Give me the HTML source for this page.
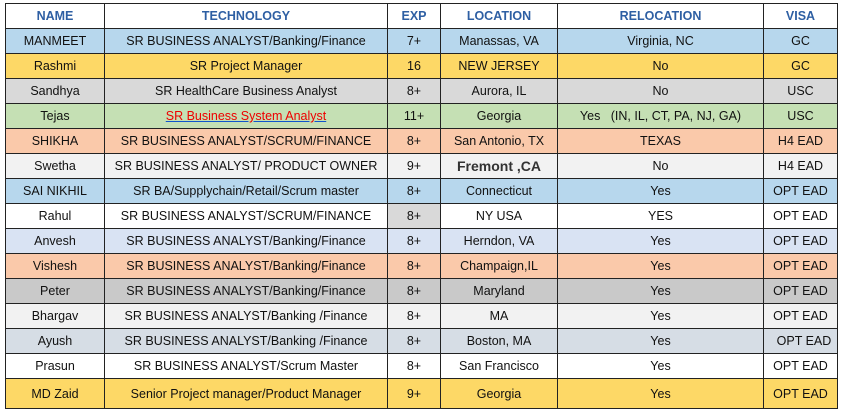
<!DOCTYPE html>
<html><head><style>
body{margin:0;background:#fff;}
table{position:absolute;left:5px;top:3px;border-collapse:collapse;table-layout:fixed;font-family:"Liberation Sans",sans-serif;font-size:12.5px;color:#111;}
td{border:1px solid #222;text-align:center;height:24px;padding:0;white-space:nowrap;overflow:hidden;}
tr.h td{color:#2e5fa3;font-weight:bold;font-size:12.5px;background:#fff;}
.b{background:#b7d7ed}.y{background:#fdd866}.g{background:#d9d9d9}.gr{background:#c5e0b4}.s{background:#fac9aa}.lg{background:#f2f2f2}.w{background:#fff}.lb{background:#d9e3f3}.dg{background:#c9c9c9}.sl{background:#d6dde5}
a{color:#e00;text-decoration:underline;text-decoration-color:#1155cc;}
</style></head><body>
<table>
<colgroup><col style="width:99px"><col style="width:283px"><col style="width:53px"><col style="width:117px"><col style="width:206px"><col style="width:74px"></colgroup>
<tr class="h"><td>NAME</td><td>TECHNOLOGY</td><td>EXP</td><td>LOCATION</td><td>RELOCATION</td><td>VISA</td></tr>
<tr class="b"><td>MANMEET</td><td>SR BUSINESS ANALYST/Banking/Finance</td><td>7+</td><td>Manassas, VA</td><td>Virginia, NC</td><td>GC</td></tr>
<tr class="y"><td>Rashmi</td><td>SR Project Manager</td><td>16</td><td>NEW JERSEY</td><td>No</td><td>GC</td></tr>
<tr class="g"><td>Sandhya</td><td>SR HealthCare Business Analyst</td><td>8+</td><td>Aurora, IL</td><td>No</td><td>USC</td></tr>
<tr class="gr"><td>Tejas</td><td><a>SR Business System Analyst </a></td><td>11+</td><td>Georgia</td><td>Yes &nbsp;&nbsp;(IN, IL, CT, PA, NJ, GA)</td><td>USC</td></tr>
<tr class="s"><td>SHIKHA</td><td>SR BUSINESS ANALYST/SCRUM/FINANCE</td><td>8+</td><td>San Antonio, TX</td><td>TEXAS</td><td>H4 EAD</td></tr>
<tr class="lg"><td>Swetha</td><td>SR BUSINESS ANALYST/ PRODUCT OWNER</td><td>9+</td><td style="font-size:14px;font-weight:bold;color:#333">Fremont ,CA</td><td>No</td><td>H4 EAD</td></tr>
<tr class="b"><td>SAI NIKHIL</td><td>SR BA/Supplychain/Retail/Scrum master</td><td>8+</td><td>Connecticut</td><td>Yes</td><td>OPT EAD</td></tr>
<tr class="w"><td>Rahul</td><td>SR BUSINESS ANALYST/SCRUM/FINANCE</td><td class="g">8+</td><td>NY USA</td><td>YES</td><td>OPT EAD</td></tr>
<tr class="lb"><td>Anvesh</td><td>SR BUSINESS ANALYST/Banking/Finance</td><td>8+</td><td>Herndon, VA</td><td>Yes</td><td>OPT EAD</td></tr>
<tr class="s"><td>Vishesh</td><td>SR BUSINESS ANALYST/Banking/Finance</td><td>8+</td><td>Champaign,IL</td><td>Yes</td><td>OPT EAD</td></tr>
<tr class="dg"><td>Peter</td><td>SR BUSINESS ANALYST/Banking/Finance</td><td>8+</td><td>Maryland</td><td>Yes</td><td>OPT EAD</td></tr>
<tr class="lg"><td>Bhargav</td><td>SR BUSINESS ANALYST/Banking /Finance</td><td>8+</td><td>MA</td><td>Yes</td><td>OPT EAD</td></tr>
<tr class="sl"><td>Ayush</td><td>SR BUSINESS ANALYST/Banking /Finance</td><td>8+</td><td>Boston, MA</td><td>Yes</td><td>&nbsp;&nbsp;OPT EAD</td></tr>
<tr class="w"><td>Prasun</td><td>SR BUSINESS ANALYST/Scrum Master</td><td>8+</td><td>San Francisco</td><td>Yes</td><td>OPT EAD</td></tr>
<tr class="y"><td style="height:29px">MD Zaid</td><td>Senior Project manager/Product Manager</td><td>9+</td><td>Georgia</td><td>Yes</td><td>OPT EAD</td></tr>
</table>
</body></html>
